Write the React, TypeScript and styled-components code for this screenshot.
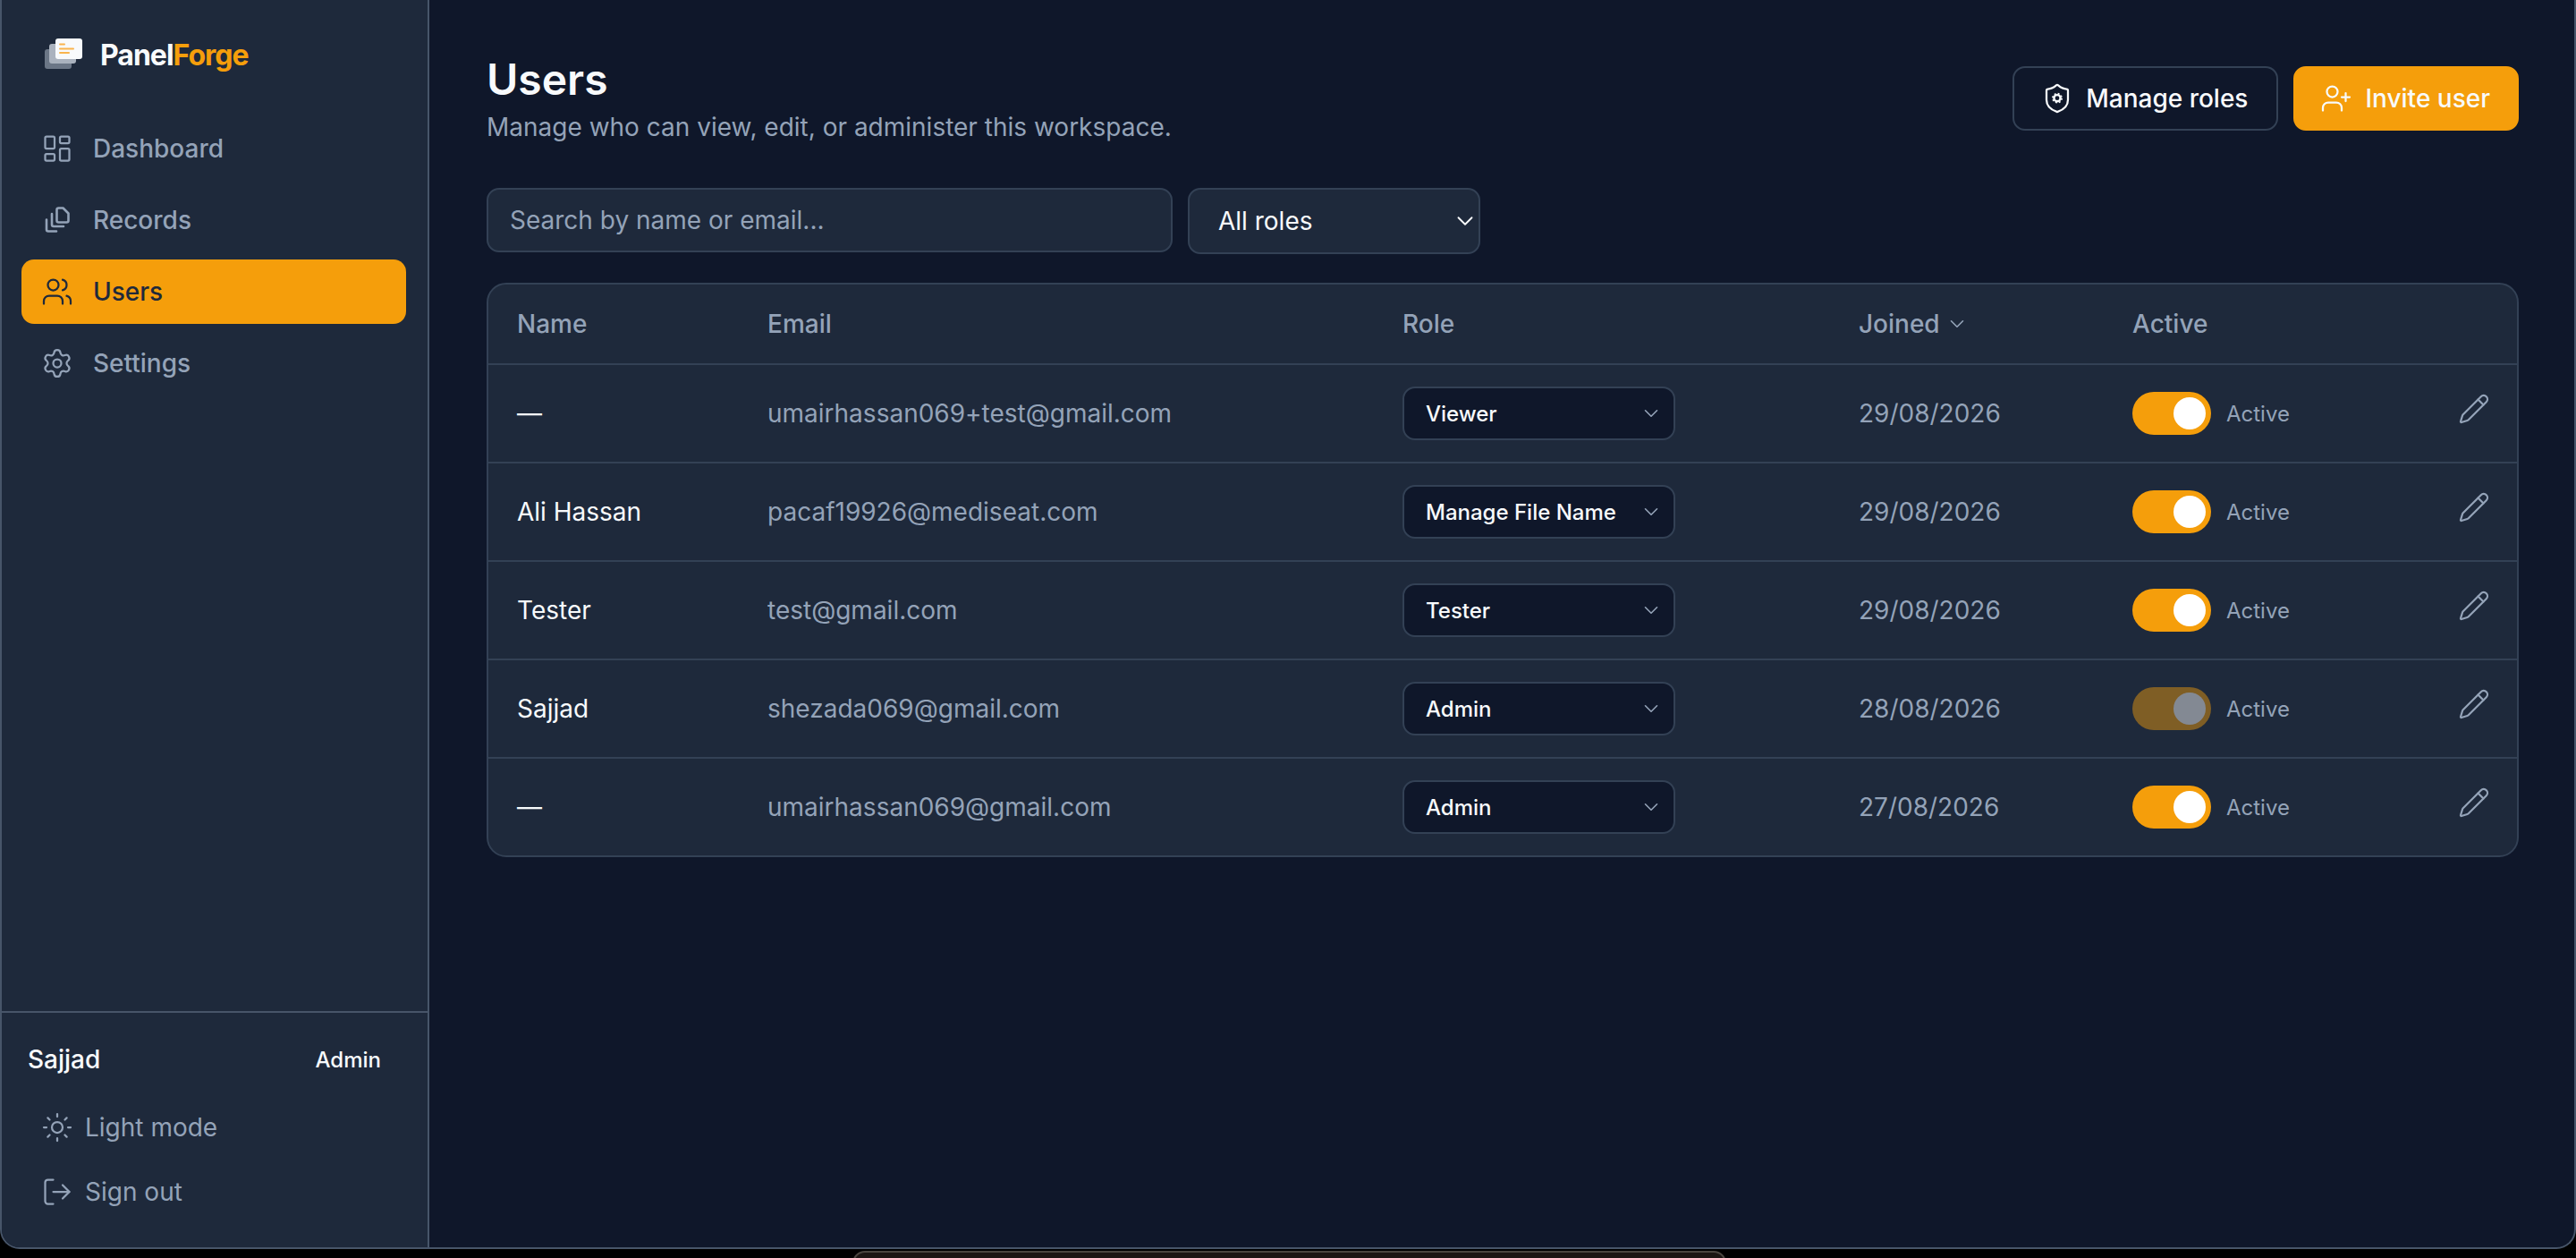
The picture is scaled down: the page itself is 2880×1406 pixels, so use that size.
import styled, { createGlobalStyle } from "styled-components";
import {
  ChevronDown,
  LayoutDashboard,
  LogOut,
  Pencil,
  Settings,
  Sun,
  UserPlus,
  Users as UsersIcon,
} from "lucide-react";

const GlobalStyle = createGlobalStyle`
  * { box-sizing: border-box; }
  html, body { margin: 0; padding: 0; background: #000; }
  body {
    font-family: Inter, "Noto Sans", sans-serif;
    color: #f8fafc;
    overflow: hidden;
  }
  button, input, select { font-family: inherit; }
`;

const Screen = styled.div`
  position: relative;
  height: 1406px;
  overflow: hidden;
  background: #000;
`;

const AppWindow = styled.div`
  display: flex;
  height: 1396px;
  border: 2px solid #475569;
  border-top: none;
  border-radius: 0 0 22px 22px;
  overflow: hidden;
  background: #0f172a;
`;

// the tab of the dock peeking out below the window
const DockEdge = styled.div`
  position: absolute;
  left: 953px;
  top: 1398px;
  width: 977px;
  height: 20px;
  background: #1c1613;
  border: 2px solid #4a453f;
  border-radius: 14px 14px 0 0;
`;

const Sidebar = styled.aside`
  width: 478px;
  flex: none;
  display: flex;
  flex-direction: column;
  background: #1e293b;
  border-right: 2px solid #475569;
`;

const Brand = styled.div`
  display: flex;
  align-items: center;
  gap: 18px;
  height: 130px;
  padding: 0 0 8px 48px;
`;

const BrandName = styled.span`
  font-size: 32px;
  font-weight: 700;
  letter-spacing: -1px;
  color: #f8fafc;
`;

const BrandAccent = styled.span`
  color: #f59e0b;
`;

const Nav = styled.nav`
  display: flex;
  flex-direction: column;
  gap: 8px;
  padding: 0 24px 0 22px;
  flex: 1;
`;

const NavItem = styled.a<{ $active?: boolean }>`
  display: flex;
  align-items: center;
  gap: 22px;
  height: 72px;
  padding-left: 22px;
  border-radius: 14px;
  font-size: 28px;
  font-weight: 500;
  color: ${(props) => (props.$active ? "#1e293b" : "#94a3b8")};
  background: ${(props) => (props.$active ? "#f59e0b" : "transparent")};
`;

const SidebarFooter = styled.div`
  border-top: 2px solid #475569;
  padding: 30px 0 26px;
`;

const UserRow = styled.div`
  display: flex;
  align-items: center;
  justify-content: space-between;
  height: 44px;
  padding: 0 52px 0 29px;
  margin-bottom: 18px;
`;

const UserName = styled.span`
  font-size: 28px;
  font-weight: 500;
  color: #f8fafc;
`;

const UserRole = styled.span`
  font-size: 24px;
  font-weight: 500;
  color: #f8fafc;
`;

const FooterLink = styled.a`
  display: flex;
  align-items: center;
  gap: 13px;
  height: 72px;
  padding-left: 44px;
  font-size: 28px;
  color: #94a3b8;
`;

const Main = styled.main`
  flex: 1;
  min-width: 0;
  padding: 0 62px 0 64px;
`;

const PageHeader = styled.header`
  display: flex;
  align-items: flex-start;
  justify-content: space-between;
  height: 210px;
  padding-top: 59px;
`;

const Title = styled.h1`
  margin: 0;
  font-size: 48px;
  line-height: 60px;
  font-weight: 600;
  color: #f8fafc;
`;

const Subtitle = styled.p`
  margin: 5px 0 0;
  font-size: 28px;
  line-height: 36px;
  color: #94a3b8;
`;

const HeaderActions = styled.div`
  display: flex;
  gap: 17px;
  margin-top: 15px;
`;

const Button = styled.button<{ $primary?: boolean }>`
  display: flex;
  align-items: center;
  gap: 14px;
  height: 72px;
  padding: ${(props) => (props.$primary ? "0 30px 0 28px" : "0 32px 0 30px")};
  border-radius: 14px;
  border: 2px solid ${(props) => (props.$primary ? "#f59e0b" : "#334155")};
  background: ${(props) => (props.$primary ? "#f59e0b" : "transparent")};
  color: #f8fafc;
  font-size: 28px;
  font-weight: 500;
  white-space: nowrap;
`;

const Filters = styled.div`
  display: flex;
  align-items: flex-start;
  gap: 17px;
  height: 106px;
`;

const SearchInput = styled.input`
  width: 767px;
  height: 72px;
  padding: 0 24px;
  border: 2px solid #334155;
  border-radius: 14px;
  background: #1e293b;
  color: #f8fafc;
  font-size: 28px;

  &::placeholder {
    color: #94a3b8;
    opacity: 1;
  }
`;

const SelectWrap = styled.div`
  position: relative;
  display: inline-flex;

  & > svg {
    position: absolute;
    top: 50%;
    transform: translateY(-50%);
    pointer-events: none;
  }
`;

const FilterWrap = styled(SelectWrap)`
  & > svg {
    right: 2px;
    color: #f8fafc;
  }
`;

const RoleWrap = styled(SelectWrap)`
  & > svg {
    right: 14px;
    color: #94a3b8;
  }
`;

const FilterSelect = styled.select`
  appearance: none;
  width: 327px;
  height: 74px;
  padding: 0 32px;
  border: 2px solid #334155;
  border-radius: 14px;
  background: #1e293b;
  color: #f8fafc;
  font-size: 28px;
`;

const RoleSelect = styled.select`
  appearance: none;
  width: 305px;
  height: 60px;
  padding: 0 24px;
  border: 2px solid #334155;
  border-radius: 14px;
  background: #0f172a;
  color: #f8fafc;
  font-size: 24px;
  font-weight: 500;
`;

const TableCard = styled.div`
  border: 2px solid #334155;
  border-radius: 22px;
  overflow: hidden;
  background: #1e293b;
`;

const Table = styled.table`
  width: 100%;
  table-layout: fixed;
  border-collapse: separate;
  border-spacing: 0;
`;

const Th = styled.th<{ $width?: number }>`
  width: ${(props) => (props.$width ? `${props.$width}px` : "auto")};
  height: 90px;
  padding: 0 0 0 32px;
  border-bottom: 2px solid #334155;
  text-align: left;
  font-size: 28px;
  font-weight: 500;
  color: #94a3b8;
`;

const SortLabel = styled.span`
  display: inline-flex;
  align-items: center;
  gap: 6px;
`;

const Tr = styled.tr`
  &:last-child td {
    border-bottom: none;
    height: 108px;
  }
`;

const Td = styled.td<{ $muted?: boolean }>`
  height: 110px;
  padding: 0 0 0 32px;
  border-bottom: 2px solid #334155;
  font-size: 28px;
  color: ${(props) => (props.$muted ? "#94a3b8" : "#f8fafc")};
`;

const ActiveCell = styled.div`
  display: flex;
  align-items: center;
  gap: 17px;
`;

const Toggle = styled.button<{ $dimmed?: boolean }>`
  display: flex;
  justify-content: flex-end;
  align-items: center;
  width: 88px;
  height: 48px;
  padding: 0 6px;
  border: none;
  border-radius: 24px;
  background: #f59e0b;
  opacity: ${(props) => (props.$dimmed ? 0.45 : 1)};
`;

const ToggleThumb = styled.span`
  width: 36px;
  height: 36px;
  border-radius: 50%;
  background: #fff;
`;

const ActiveLabel = styled.span`
  font-size: 24px;
  color: #94a3b8;
`;

const EditCell = styled.div`
  display: flex;
  justify-content: flex-end;
  padding: 0 30px 10px 0;
  color: #94a3b8;
`;

const EditButton = styled.button`
  display: flex;
  padding: 0;
  border: none;
  background: none;
  color: inherit;
`;

const RecordsIcon = () => (
  <svg width="36" height="36" viewBox="-4 -3 36 36" fill="none" stroke="currentColor" strokeWidth="2.6" strokeLinecap="round" strokeLinejoin="round">
    <path d="M15.5 1.5h5l6 6v8a2 2 0 0 1-2 2h-9a2 2 0 0 1-2-2v-12a2 2 0 0 1 2-2z" />
    <path d="M8 8v12a2 2 0 0 0 2 2h11" />
    <path d="M2 14.5v11a2 2 0 0 0 2 2h9" />
  </svg>
);

const ShieldGearIcon = () => (
  <svg width="36" height="36" viewBox="0 0 24 24" fill="none" stroke="currentColor" strokeWidth="1.5" strokeLinecap="round" strokeLinejoin="round">
    <path d="M20 13c0 5-3.5 7.5-7.66 8.95a1 1 0 0 1-.67-.01C7.5 20.5 4 18 4 13V6a1 1 0 0 1 1-1c2 0 4.5-1.2 6.24-2.72a1.17 1.17 0 0 1 1.52 0C14.51 3.81 17 5 19 5a1 1 0 0 1 1 1z" />
    <circle cx="12" cy="11.8" r="2.4" strokeWidth="1.6" />
    <circle cx="12" cy="11.8" r="3.4" strokeWidth="1.1" strokeDasharray="1.3 1.37" strokeLinecap="butt" />
  </svg>
);

const LogoMark = () => (
  <svg width="44" height="36" viewBox="0 0 44 36" fill="none">
    <rect x="0" y="12" width="30" height="22" rx="3" fill="#6b7686" />
    <rect x="5" y="6" width="30" height="22" rx="3" fill="#aab2be" />
    <rect x="12" y="0" width="30" height="23" rx="3" fill="#f8fafc" />
    <rect x="16" y="5.5" width="7" height="2" rx="1" fill="#f9b44d" />
    <rect x="16" y="10.5" width="17" height="2" rx="1" fill="#f9b44d" />
    <rect x="16" y="15" width="12" height="2" rx="1" fill="#f9b44d" />
  </svg>
);

const ROLE_OPTIONS = ["Viewer", "Manage File Name", "Tester", "Admin"];

const users = [
  { name: "—", email: "umairhassan069+test@gmail.com", role: "Viewer", joined: "29/08/2026", dimmed: false },
  { name: "Ali Hassan", email: "pacaf19926@mediseat.com", role: "Manage File Name", joined: "29/08/2026", dimmed: false },
  { name: "Tester", email: "test@gmail.com", role: "Tester", joined: "29/08/2026", dimmed: false },
  { name: "Sajjad", email: "shezada069@gmail.com", role: "Admin", joined: "28/08/2026", dimmed: true },
  { name: "—", email: "umairhassan069@gmail.com", role: "Admin", joined: "27/08/2026", dimmed: false },
];

export default function App() {
  return (
    <Screen>
      <GlobalStyle />
      <AppWindow>
        <Sidebar>
          <Brand>
            <LogoMark />
            <BrandName>
              Panel<BrandAccent>Forge</BrandAccent>
            </BrandName>
          </Brand>
          <Nav>
            <NavItem>
              <LayoutDashboard size={36} strokeWidth={1.5} />
              Dashboard
            </NavItem>
            <NavItem>
              <RecordsIcon />
              Records
            </NavItem>
            <NavItem $active>
              <UsersIcon size={36} strokeWidth={1.5} />
              Users
            </NavItem>
            <NavItem>
              <Settings size={36} strokeWidth={1.5} />
              Settings
            </NavItem>
          </Nav>
          <SidebarFooter>
            <UserRow>
              <UserName>Sajjad</UserName>
              <UserRole>Admin</UserRole>
            </UserRow>
            <FooterLink>
              <Sun size={36} strokeWidth={1.5} />
              Light mode
            </FooterLink>
            <FooterLink>
              <LogOut size={36} strokeWidth={1.5} />
              Sign out
            </FooterLink>
          </SidebarFooter>
        </Sidebar>
        <Main>
          <PageHeader>
            <div>
              <Title>Users</Title>
              <Subtitle>Manage who can view, edit, or administer this workspace.</Subtitle>
            </div>
            <HeaderActions>
              <Button>
                <ShieldGearIcon />
                Manage roles
              </Button>
              <Button $primary>
                <UserPlus size={36} strokeWidth={1.5} />
                Invite user
              </Button>
            </HeaderActions>
          </PageHeader>
          <Filters>
            <SearchInput placeholder="Search by name or email..." />
            <FilterWrap>
              <FilterSelect defaultValue="All roles">
                <option>All roles</option>
                {ROLE_OPTIONS.map((role) => (
                  <option key={role}>{role}</option>
                ))}
              </FilterSelect>
              <ChevronDown size={30} strokeWidth={1.5} />
            </FilterWrap>
          </Filters>
          <TableCard>
            <Table>
              <thead>
                <tr>
                  <Th $width={280}>Name</Th>
                  <Th $width={710}>Email</Th>
                  <Th $width={510}>Role</Th>
                  <Th $width={306}>
                    <SortLabel>
                      Joined
                      <ChevronDown size={26} strokeWidth={1.5} />
                    </SortLabel>
                  </Th>
                  <Th $width={352}>Active</Th>
                  <Th />
                </tr>
              </thead>
              <tbody>
                {users.map((user) => (
                  <Tr key={user.email}>
                    <Td>{user.name}</Td>
                    <Td $muted>{user.email}</Td>
                    <Td>
                      <RoleWrap>
                        <RoleSelect defaultValue={user.role}>
                          {ROLE_OPTIONS.map((role) => (
                            <option key={role}>{role}</option>
                          ))}
                        </RoleSelect>
                        <ChevronDown size={26} strokeWidth={1.5} />
                      </RoleWrap>
                    </Td>
                    <Td $muted>{user.joined}</Td>
                    <Td>
                      <ActiveCell>
                        <Toggle $dimmed={user.dimmed} aria-label="Active">
                          <ToggleThumb />
                        </Toggle>
                        <ActiveLabel>Active</ActiveLabel>
                      </ActiveCell>
                    </Td>
                    <Td>
                      <EditCell>
                        <EditButton aria-label="Edit user">
                          <Pencil size={36} strokeWidth={1.5} />
                        </EditButton>
                      </EditCell>
                    </Td>
                  </Tr>
                ))}
              </tbody>
            </Table>
          </TableCard>
        </Main>
      </AppWindow>
      <DockEdge />
    </Screen>
  );
}
